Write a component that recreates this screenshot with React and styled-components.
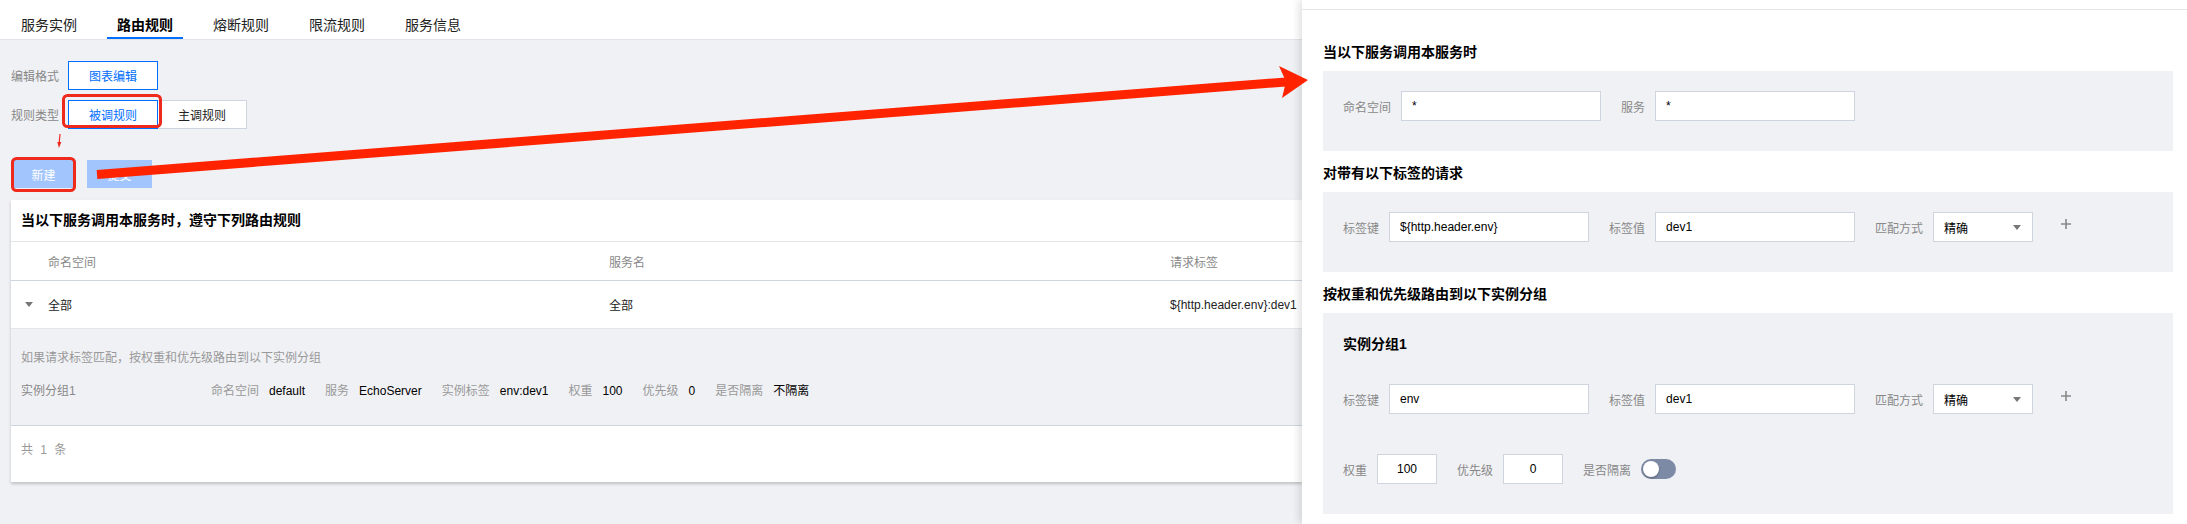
import React from "react";
import styled, { createGlobalStyle } from "styled-components";

const GlobalStyle = createGlobalStyle`
  html, body {
    margin: 0;
    padding: 0;
  }
  body {
    font-family: "Liberation Sans", "Noto Sans CJK SC", sans-serif;
    font-size: 12px;
    color: #000;
    background: #f0f1f5;
  }
  * {
    box-sizing: border-box;
  }
`;

const Screen = styled.div`
  position: relative;
  display: flex;
  width: 2187px;
  height: 524px;
  overflow: hidden;
`;

const Main = styled.main`
  flex: 1;
  min-width: 0;
  background: #f0f1f5;
`;

const TabBar = styled.nav`
  display: flex;
  align-items: flex-end;
  gap: 20px;
  height: 40px;
  padding-left: 11px;
  background: #fff;
  border-bottom: 1px solid #e2e4e9;
`;

const Tab = styled.span`
  padding: 0 10px;
  font-size: 14px;
  line-height: 24px;
  color: ${(p) => (p.$active ? "#000" : "#222")};
  font-weight: ${(p) => (p.$active ? 700 : 400)};
  border-bottom: 2px solid ${(p) => (p.$active ? "#006eff" : "transparent")};
`;

const Content = styled.div`
  display: flex;
  flex-direction: column;
  padding: 21px 0 0 11px;
`;

const FormRow = styled.div`
  display: flex;
  align-items: center;
  height: 29px;
  margin-bottom: 10px;
`;

const FormLabel = styled.span`
  width: 58px;
  color: #888;
`;

const Segment = styled.span`
  position: relative;
  z-index: ${(p) => (p.$selected ? 1 : 0)};
  display: flex;
  align-items: center;
  justify-content: center;
  width: 90px;
  height: 29px;
  margin-left: -1px;
  background: #fff;
  color: ${(p) => (p.$selected ? "#006eff" : "#222")};
  border: 1px solid ${(p) => (p.$selected ? "#006eff" : "#cfd5de")};
`;

const Actions = styled.div`
  display: flex;
  gap: 11px;
  margin-top: 21px;
`;

const PrimaryButton = styled.span`
  display: flex;
  align-items: center;
  justify-content: center;
  width: 65px;
  height: 28px;
  background: #a3c5fd;
  color: #fff;
`;

const Card = styled.section`
  margin-top: 12px;
  background: #fff;
  box-shadow: 0 2px 3px rgba(0, 0, 0, 0.2);
`;

const CardTitle = styled.h3`
  margin: 0;
  height: 42px;
  padding-left: 10px;
  font-size: 14px;
  line-height: 41px;
  font-weight: 700;
  border-bottom: 1px solid #e5e5e5;
`;

const Grid = styled.div`
  display: grid;
  grid-template-columns: 27px 561px 561px 1fr;
  align-items: center;
  height: ${(p) => p.$height}px;
  color: ${(p) => (p.$head ? "#888" : "#222")};
  border-bottom: 1px solid ${(p) => (p.$head ? "#cfd5de" : "#e5e5e5")};
`;

const Cell = styled.span`
  padding-left: 10px;
  white-space: nowrap;
`;

const Expander = styled.span`
  display: flex;
  justify-content: flex-end;
  padding-right: 5px;
`;

const Expanded = styled.div`
  padding: 20px 10px 0;
  height: 97px;
  background: #f0f1f5;
  border-bottom: 1px solid #cfd5de;
  line-height: 18px;
`;

const Hint = styled.div`
  color: #999;
`;

const GroupLine = styled.div`
  display: flex;
  align-items: center;
  gap: 20px;
  margin-top: 15px;
  white-space: nowrap;
`;

const GroupName = styled.span`
  width: 170px;
  color: #888;
`;

const Pair = styled.span`
  display: flex;
  gap: 10px;
`;

const Key = styled.span`
  color: #999;
`;

const Footer = styled.div`
  height: 56px;
  padding: 15px 10px 0;
  line-height: 18px;
  color: #999;
  word-spacing: 4px;
`;

const Drawer = styled.aside`
  position: relative;
  z-index: 2;
  flex: 0 0 885px;
  background: #fff;
  box-shadow: -3px 0 8px rgba(0, 0, 0, 0.12);
`;

const DrawerHead = styled.div`
  height: 10px;
  border-bottom: 1px solid #e5e5e5;
`;

const DrawerBody = styled.div`
  padding: 0 14px 0 21px;
`;

const SectionTitle = styled.h4`
  margin: ${(p) => (p.$first ? 32 : 12)}px 0 9px;
  font-size: 14px;
  line-height: 20px;
  font-weight: 700;
`;

const Box = styled.div`
  padding: 20px 20px 30px;
  background: #f0f1f5;
`;

const GroupTitle = styled.div`
  font-size: 14px;
  font-weight: 700;
  line-height: 22px;
  margin-bottom: 29px;
`;

const FieldRow = styled.div`
  display: flex;
  align-items: center;
  gap: 20px;
  height: 30px;
  & + & {
    margin-top: 40px;
  }
`;

const Field = styled.label`
  display: flex;
  align-items: center;
  gap: 10px;
  color: #888;
`;

const Input = styled.input`
  width: ${(p) => p.$width}px;
  height: 30px;
  padding: 0 10px;
  border: 1px solid #cfd5de;
  background: #fff;
  font: inherit;
  color: #000;
  text-align: ${(p) => (p.$center ? "center" : "left")};
  outline: none;
`;

const Select = styled.span`
  display: flex;
  align-items: center;
  justify-content: space-between;
  width: 100px;
  height: 30px;
  padding: 0 11px 0 10px;
  border: 1px solid #cfd5de;
  background: #fff;
  color: #000;
`;

const Plus = styled.svg`
  margin: -6px 0 0 8px;
`;

const Switch = styled.span`
  display: flex;
  align-items: center;
  width: 35px;
  height: 20px;
  padding: 0 2px;
  border-radius: 10px;
  background: #7d8aa5;
`;

const Knob = styled.span`
  width: 16px;
  height: 16px;
  border-radius: 50%;
  background: #fff;
  box-shadow: 0 1px 2px rgba(0, 0, 0, 0.3);
`;

const Overlay = styled.svg`
  position: absolute;
  top: 0;
  left: 0;
  z-index: 10;
  pointer-events: none;
`;

function Caret() {
  return (
    <svg width="8" height="5" viewBox="0 0 8 5">
      <polygon points="0,0 8,0 4,5" fill="#777" />
    </svg>
  );
}

function Annotations() {
  return (
    <Overlay width="2187" height="524" viewBox="0 0 2187 524">
      <rect x="63.5" y="95.5" width="97" height="31" rx="4" fill="none" stroke="#ee2a1d" strokeWidth="3" />
      <rect x="12.5" y="158.5" width="62" height="32" rx="4" fill="none" stroke="#ee2a1d" strokeWidth="3" />
      <line x1="60" y1="134" x2="59.2" y2="143" stroke="#ee2a1d" strokeWidth="1.2" />
      <polygon points="57.3,142 61.3,142 59,148" fill="#ee2a1d" />
      <line x1="97" y1="174.5" x2="1286" y2="82" stroke="#ff2300" strokeWidth="9" />
      <polygon points="1308,80 1279,66 1286,81.5 1282,98" fill="#ff2300" />
    </Overlay>
  );
}

function TagRow({ tagKey, tagValue }) {
  return (
    <FieldRow>
      <Field>
        标签键
        <Input $width={200} readOnly value={tagKey} />
      </Field>
      <Field>
        标签值
        <Input $width={200} readOnly value={tagValue} />
      </Field>
      <Field>
        匹配方式
        <Select>
          精确
          <Caret />
        </Select>
      </Field>
      <Plus width="10" height="10" viewBox="0 0 10 10">
        <path d="M5 0v10M0 5h10" stroke="#888" strokeWidth="1.6" />
      </Plus>
    </FieldRow>
  );
}

const tabs = ["服务实例", "路由规则", "熔断规则", "限流规则", "服务信息"];

const groupInfo = [
  ["命名空间", "default"],
  ["服务", "EchoServer"],
  ["实例标签", "env:dev1"],
  ["权重", "100"],
  ["优先级", "0"],
  ["是否隔离", "不隔离"],
];

export default function App() {
  return (
    <Screen>
      <GlobalStyle />
      <Main>
        <TabBar>
          {tabs.map((t) => (
            <Tab key={t} $active={t === "路由规则"}>
              {t}
            </Tab>
          ))}
        </TabBar>
        <Content>
          <FormRow>
            <FormLabel>编辑格式</FormLabel>
            <Segment $selected>图表编辑</Segment>
          </FormRow>
          <FormRow>
            <FormLabel>规则类型</FormLabel>
            <Segment $selected>被调规则</Segment>
            <Segment>主调规则</Segment>
          </FormRow>
          <Actions>
            <PrimaryButton>新建</PrimaryButton>
            <PrimaryButton>提交</PrimaryButton>
          </Actions>
          <Card>
            <CardTitle>当以下服务调用本服务时，遵守下列路由规则</CardTitle>
            <Grid $head $height={39}>
              <span />
              <Cell>命名空间</Cell>
              <Cell>服务名</Cell>
              <Cell>请求标签</Cell>
            </Grid>
            <Grid $height={48}>
              <Expander>
                <Caret />
              </Expander>
              <Cell>全部</Cell>
              <Cell>全部</Cell>
              <Cell>{"${http.header.env}:dev1"}</Cell>
            </Grid>
            <Expanded>
              <Hint>如果请求标签匹配，按权重和优先级路由到以下实例分组</Hint>
              <GroupLine>
                <GroupName>实例分组1</GroupName>
                {groupInfo.map(([k, v]) => (
                  <Pair key={k}>
                    <Key>{k}</Key>
                    <span>{v}</span>
                  </Pair>
                ))}
              </GroupLine>
            </Expanded>
            <Footer>共 1 条</Footer>
          </Card>
        </Content>
      </Main>
      <Drawer>
        <DrawerHead />
        <DrawerBody>
          <SectionTitle $first>当以下服务调用本服务时</SectionTitle>
          <Box>
            <FieldRow>
              <Field>
                命名空间
                <Input $width={200} readOnly value="*" />
              </Field>
              <Field>
                服务
                <Input $width={200} readOnly value="*" />
              </Field>
            </FieldRow>
          </Box>
          <SectionTitle>对带有以下标签的请求</SectionTitle>
          <Box>
            <TagRow tagKey="${http.header.env}" tagValue="dev1" />
          </Box>
          <SectionTitle>按权重和优先级路由到以下实例分组</SectionTitle>
          <Box>
            <GroupTitle>实例分组1</GroupTitle>
            <TagRow tagKey="env" tagValue="dev1" />
            <FieldRow>
              <Field>
                权重
                <Input $width={60} $center readOnly value="100" />
              </Field>
              <Field>
                优先级
                <Input $width={60} $center readOnly value="0" />
              </Field>
              <Field>
                是否隔离
                <Switch>
                  <Knob />
                </Switch>
              </Field>
            </FieldRow>
          </Box>
        </DrawerBody>
      </Drawer>
      <Annotations />
    </Screen>
  );
}
